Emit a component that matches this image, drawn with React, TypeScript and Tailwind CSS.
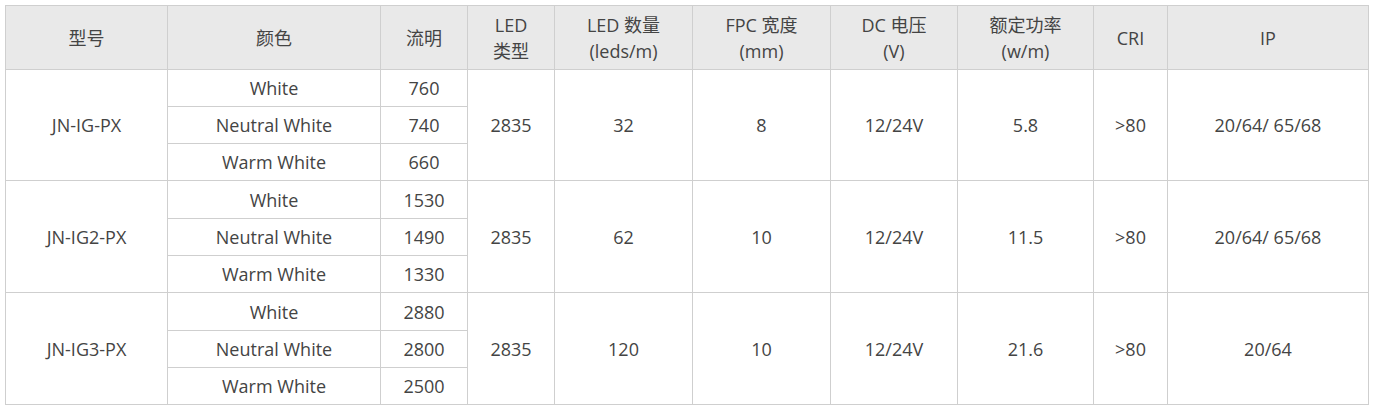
import React from 'react';

type Group = {
  model: string;
  colors: [string, string][];
  led: string;
  qty: string;
  fpc: string;
  dc: string;
  power: string;
  cri: string;
  ip: string;
};

const groups: Group[] = [
  {
    model: 'JN-IG-PX',
    colors: [['White', '760'], ['Neutral White', '740'], ['Warm White', '660']],
    led: '2835', qty: '32', fpc: '8', dc: '12/24V', power: '5.8', cri: '>80', ip: '20/64/ 65/68',
  },
  {
    model: 'JN-IG2-PX',
    colors: [['White', '1530'], ['Neutral White', '1490'], ['Warm White', '1330']],
    led: '2835', qty: '62', fpc: '10', dc: '12/24V', power: '11.5', cri: '>80', ip: '20/64/ 65/68',
  },
  {
    model: 'JN-IG3-PX',
    colors: [['White', '2880'], ['Neutral White', '2800'], ['Warm White', '2500']],
    led: '2835', qty: '120', fpc: '10', dc: '12/24V', power: '21.6', cri: '>80', ip: '20/64',
  },
];

const widths = [162, 213, 87, 87, 138, 138, 127, 136, 74, 201];

const th = 'border border-[#cfcfcf] bg-[#e9e9e9] font-normal text-center align-middle leading-[26px] p-0';
const td = 'border border-[#cfcfcf] text-center align-middle p-0 leading-[24px]';

export default function App() {
  return (
    <div className="bg-white w-[1374px] h-[410px] pt-[5px] pl-[5px] text-[18px] text-[#444]" style={{ fontFamily: '"Open Sans", "Noto Sans CJK SC", sans-serif' }}>
      <table className="border-collapse table-fixed w-[1363px]">
        <colgroup>
          {widths.map((w, i) => (
            <col key={i} style={{ width: w }} />
          ))}
        </colgroup>
        <thead>
          <tr className="h-[64px]">
            <th className={th}>型号</th>
            <th className={th}>颜色</th>
            <th className={th}>流明</th>
            <th className={th}>LED<br />类型</th>
            <th className={th}>LED 数量<br />(leds/m)</th>
            <th className={th}>FPC 宽度<br />(mm)</th>
            <th className={th}>DC 电压<br />(V)</th>
            <th className={th}>额定功率<br />(w/m)</th>
            <th className={th}>CRI</th>
            <th className={th}>IP</th>
          </tr>
        </thead>
        <tbody>
          {groups.map((g, gi) =>
            g.colors.map(([c, lm], i) => (
              <tr key={g.model + i} className={gi > 0 && i === 0 ? 'h-[38px]' : 'h-[37px]'}>
                {i === 0 && <td rowSpan={3} className={td}>{g.model}</td>}
                <td className={td}>{c}</td>
                <td className={td}>{lm}</td>
                {i === 0 && (
                  <>
                    <td rowSpan={3} className={td}>{g.led}</td>
                    <td rowSpan={3} className={td}>{g.qty}</td>
                    <td rowSpan={3} className={td}>{g.fpc}</td>
                    <td rowSpan={3} className={td}>{g.dc}</td>
                    <td rowSpan={3} className={td}>{g.power}</td>
                    <td rowSpan={3} className={td}>{g.cri}</td>
                    <td rowSpan={3} className={td}>{g.ip}</td>
                  </>
                )}
              </tr>
            ))
          )}
        </tbody>
      </table>
    </div>
  );
}
